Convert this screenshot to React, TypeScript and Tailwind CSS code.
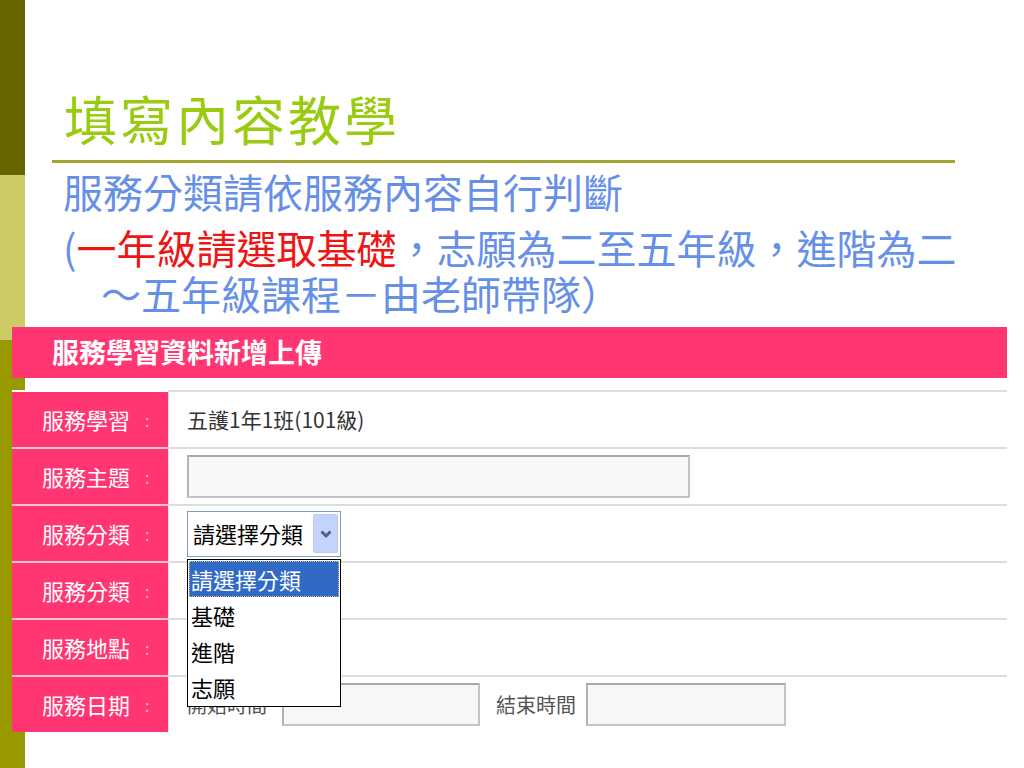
const cjk = { fontFamily: '"Noto Sans CJK TC", "Noto Sans", sans-serif' };

function Chevron() {
  return (
    <svg width="14" height="10" viewBox="0 0 14 10">
      <path d="M2.5 2.5 L7 7 L11.5 2.5" fill="none" stroke="#4d6185" strokeWidth="3" />
    </svg>
  );
}

function Label({ text, first }: { text: string; first?: boolean }) {
  return (
    <div
      className={
        "flex w-[156px] shrink-0 items-center bg-[#ff3672] pl-[30px] text-[22px] text-white border-t-2 " +
        (first ? "border-white" : "border-[#f9c3d3]")
      }
    >
      <span className="w-[103px]">{text}</span>
      <span className="text-[16px] text-[#fbb5cb]">:</span>
    </div>
  );
}

function Row({
  label,
  first,
  children,
}: {
  label: string;
  first?: boolean;
  children?: React.ReactNode;
}) {
  return (
    <div className="flex h-[57px]">
      <Label text={label} first={first} />
      <div className="flex flex-1 items-center border-t-2 border-l border-[#dddddd] bg-white pl-[18px]">
        {children}
      </div>
    </div>
  );
}

function TextBox({ w }: { w: string }) {
  return (
    <div
      className={
        w +
        " h-[43px] border-2 border-[#c4c4c4] border-t-[#a9a9a9] border-l-[#b4b4b4] bg-[#f7f7f7]"
      }
    />
  );
}

export default function App() {
  return (
    <div className="relative h-[768px] w-[1024px] overflow-hidden bg-white" style={cjk}>
      {/* slide side stripe */}
      <div className="absolute left-0 top-0 flex h-full w-[25px] flex-col">
        <div className="h-[175px] bg-[#666600]" />
        <div className="h-[165px] bg-[#cccc66]" />
        <div className="flex-1 bg-[#999900]" />
      </div>

      <div className="relative">
        <div className="h-[160px] pl-[64px] pt-[86px]">
          <div className="text-[53px] leading-[64px] tracking-[3px] text-[#99cc11]">填寫內容教學</div>
        </div>
        <div className="ml-[52px] h-[3px] w-[903px] bg-[#a3a32e]" />

        <div className="ml-[63px] text-[40px] text-[#6690e8]">
          <div className="leading-[56px]">服務分類請依服務內容自行判斷</div>
          <div className="mt-[5px] leading-[46px]">
            (<span className="text-[#ee1515]">一年級請選取基礎</span>，志願為二至五年級，進階為二
          </div>
          <div className="pl-[38px] leading-[46px]">～五年級課程－由老師帶隊）</div>
        </div>

        <div className="ml-[12px] mr-[17px] mt-[11px]">
          <div className="flex h-[51px] items-center bg-[#ff3672] pl-[40px] text-[27px] font-bold text-white">
            服務學習資料新增上傳
          </div>
          <div className="h-[12px]" />

          <Row label="服務學習" first>
            <span className="text-[21px] text-[#333333]">五護1年1班(101級)</span>
          </Row>
          <Row label="服務主題">
            <TextBox w="w-[503px]" />
          </Row>
          <Row label="服務分類">
            <div className="relative z-10">
              <div className="flex h-[46px] w-[154px] items-center justify-between border border-[#7f9db9] bg-white pl-[5px] pr-[2px]">
                <span className="text-[22px] text-black">請選擇分類</span>
                <div className="flex h-[39px] w-[25px] items-center justify-center rounded-[2px] border border-[#b9c9f3] bg-[#c3d3fb]">
                  <Chevron />
                </div>
              </div>
              <div className="absolute left-0 top-[48px] w-[154px] border border-black bg-white p-[1px] text-[22px] text-black">
                <div className="h-[36px] border border-dotted border-[#d6c078] bg-[#316ac5] pl-[1px] leading-[34px] text-white">
                  請選擇分類
                </div>
                <div className="h-[36px] pl-[2px] leading-[36px]">基礎</div>
                <div className="h-[36px] pl-[2px] leading-[36px]">進階</div>
                <div className="h-[36px] pl-[2px] leading-[36px]">志願</div>
              </div>
            </div>
          </Row>
          <Row label="服務分類" />
          <Row label="服務地點" />
          <Row label="服務日期">
            <span className="text-[20px] text-[#555555]">開始時間</span>
            <div className="ml-[15px]">
              <TextBox w="w-[198px]" />
            </div>
            <span className="ml-[16px] text-[20px] text-[#555555]">結束時間</span>
            <div className="ml-[10px]">
              <TextBox w="w-[200px]" />
            </div>
          </Row>
        </div>
      </div>
    </div>
  );
}
